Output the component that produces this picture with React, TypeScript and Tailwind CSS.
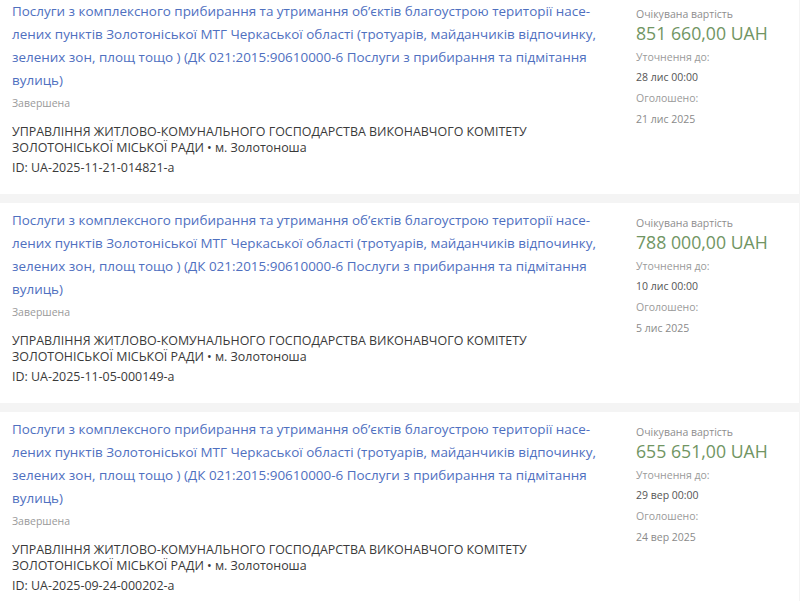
import React from "react";

type Tender = {
  amount: string;
  until: string;
  announced: string;
  id: string;
};

const tenders: Tender[] = [
  { amount: "851 660,00 UAH", until: "28 лис 00:00", announced: "21 лис 2025", id: "ID: UA-2025-11-21-014821-a" },
  { amount: "788 000,00 UAH", until: "10 лис 00:00", announced: "5 лис 2025", id: "ID: UA-2025-11-05-000149-a" },
  { amount: "655 651,00 UAH", until: "29 вер 00:00", announced: "24 вер 2025", id: "ID: UA-2025-09-24-000202-a" },
];

function Card({ t }: { t: Tender }) {
  return (
    <div className="bg-white h-[200px] flex shrink-0">
      <div className="w-[636px] pl-3 pt-[6px]">
        <div className="text-[13.45px] leading-[23px] text-[#4f70bf]">
          Послуги з комплексного прибирання та утримання об’єктів благоустрою території насе-
          <br />
          лених пунктів Золотоніської МТГ Черкаської області (тротуарів, майданчиків відпочинку,
          <br />
          зелених зон, площ тощо ) (ДК 021:2015:90610000-6 Послуги з прибирання та підмітання
          <br />
          вулиць)
        </div>
        <div className="mt-[3px] text-[10.5px] leading-[16px] text-[#9a9a9a]">Завершена</div>
        <div className="mt-[13px] text-[12.45px] leading-[15.5px] text-[#3a3a3a]">
          УПРАВЛІННЯ ЖИТЛОВО-КОМУНАЛЬНОГО ГОСПОДАРСТВА ВИКОНАВЧОГО КОМІТЕТУ
          <br />
          ЗОЛОТОНІСЬКОЇ МІСЬКОЇ РАДИ • м. Золотоноша
        </div>
        <div className="mt-[5px] text-[12.45px] leading-[16px] text-[#3a3a3a]">{t.id}</div>
      </div>
      <div className="pt-[12px] flex flex-col">
        <div className="text-[10.5px] leading-[17px] text-[#8e8e8e]">Очікувана вартість</div>
        <div className="text-[17.7px] leading-[20px] text-[#719563]">{t.amount}</div>
        <div className="mt-[4px] text-[10.5px] leading-[20px] text-[#9a9a9a]">Уточнення до:</div>
        <div className="text-[10.5px] leading-[21px] text-[#555]">{t.until}</div>
        <div className="text-[10.5px] leading-[21px] text-[#9a9a9a]">Оголошено:</div>
        <div className="text-[10.5px] leading-[20px] text-[#8a8a8a]">{t.announced}</div>
      </div>
    </div>
  );
}

export default function App() {
  return (
    <div
      className="w-[800px] h-[601px] overflow-hidden bg-[#f4f4f4]"
      style={{ fontFamily: '"Open Sans", "Noto Sans", sans-serif' }}
    >
      <div className="-mt-[6px] flex flex-col gap-[9px] pr-px">
        {tenders.map((t) => (
          <Card key={t.id} t={t} />
        ))}
      </div>
    </div>
  );
}
